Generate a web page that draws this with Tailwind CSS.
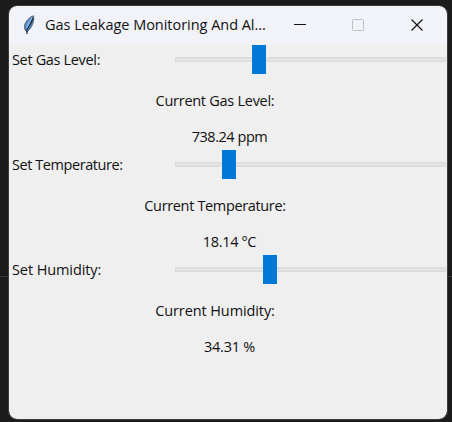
<!DOCTYPE html>
<html lang="en">
<head>
<meta charset="utf-8">
<title>Gas Leakage Monitoring</title>
<script src="https://cdn.jsdelivr.net/npm/@tailwindcss/browser@4"></script>
</head>
<body class="relative h-[422px] w-[452px] overflow-hidden bg-[#1b1b1b] pt-[6px] pl-[9px] font-['Open_Sans','Noto_Sans',sans-serif] text-[14.5px] text-[#111]">
<div class="absolute top-[276px] left-0 h-px w-full bg-[#3a3a3c]"></div>
<main class="relative h-[413px] w-[438px] overflow-hidden rounded-[8px] bg-[#efefef] outline outline-[#3c3c3c]">
  <header class="flex h-[38px] items-center bg-[#f1f3f8] pl-[13px]">
    <svg class="h-[20px] w-[14px] shrink-0" viewBox="0 0 14 20">
      <path d="M11.500 .8C7.500 2 3.500 6.500 2.500 10.500L2.800 14.500L5 17L7.500 14.500C10.500 11 12.500 5 11.500 .8Z" fill="#4b8bd0" stroke="#555b63" stroke-width=".9"/>
      <path d="M10 3C7.500 6 5.500 9.500 4.800 13" stroke="#8fbcec" stroke-width="1.200" fill="none"/>
      <path d="M11 3C9.500 8 7 12 5 14.500V19" stroke="#24272c" stroke-width="1.200" fill="none"/>
    </svg>
    <h1 class="ml-[9px] w-[236px] whitespace-nowrap"><span class="inline-block tracking-[-0.03px]">Gas Leakage Monitoring And Al...</span></h1>
    <svg class="h-[14px] w-[145px] shrink-0" viewBox="0 0 145 14" fill="none">
      <path d="M13 6.500H25" transform="translate(0 0)" stroke="#111"/>
      <rect x="71.500" y="1.500" width="11" height="11" rx="1" stroke="#bfc1c5"/>
      <path d="M130.500 1.500L141.500 12.500M141.500 1.500L130.500 12.500" stroke="#111" stroke-width="1.200"/>
    </svg>
  </header>
  <section class="h-[105px]">
    <div class="flex h-[31px] items-center pl-[3px]">
      <label class="w-[163px] pt-[1px] whitespace-nowrap"><span class="inline-block tracking-[-0.34px]">Set Gas Level:</span></label>
      <div class="flex h-[29px] w-[272px] items-center pl-[77px]"><div class="absolute left-[166px] h-[5px] w-[271px] border-y-2 border-x border-[#dddddd] bg-[#e7eaea]"></div><div class="relative h-[29px] w-[14px] bg-[#0078d7]"></div></div>
    </div>
    <div class="flex h-[51px] items-center justify-center pr-[26px]"><span class="tracking-[-0.27px]">Current Gas Level:</span></div>
    <div class="flex h-[21px] items-center justify-center pl-[3px]"><span class="tracking-[-0.45px]">738.24 ppm</span></div>
  </section>
  <section class="h-[105px]">
    <div class="flex h-[31px] items-center pl-[3px]">
      <label class="w-[163px] pt-[1px] whitespace-nowrap"><span class="inline-block tracking-[-0.43px]">Set Temperature:</span></label>
      <div class="flex h-[29px] w-[272px] items-center pl-[47px]"><div class="absolute left-[166px] h-[5px] w-[271px] border-y-2 border-x border-[#dddddd] bg-[#e7eaea]"></div><div class="relative h-[29px] w-[14px] bg-[#0078d7]"></div></div>
    </div>
    <div class="flex h-[51px] items-center justify-center pr-[26px]"><span class="tracking-[-0.35px]">Current Temperature:</span></div>
    <div class="flex h-[21px] items-center justify-center pl-[3px]"><span class="tracking-[-0.35px]">18.14 °C</span></div>
  </section>
  <section class="h-[105px]">
    <div class="flex h-[31px] items-center pl-[3px]">
      <label class="w-[163px] pt-[1px] whitespace-nowrap"><span class="inline-block tracking-[-0.1px]">Set Humidity:</span></label>
      <div class="flex h-[29px] w-[272px] items-center pl-[88px]"><div class="absolute left-[166px] h-[5px] w-[271px] border-y-2 border-x border-[#dddddd] bg-[#e7eaea]"></div><div class="relative h-[29px] w-[14px] bg-[#0078d7]"></div></div>
    </div>
    <div class="flex h-[51px] items-center justify-center pr-[26px]"><span class="tracking-[-0.1px]">Current Humidity:</span></div>
    <div class="flex h-[21px] items-center justify-center pl-[3px]"><span class="tracking-[-0.25px]">34.31 %</span></div>
  </section>
</main>
</body>
</html>
